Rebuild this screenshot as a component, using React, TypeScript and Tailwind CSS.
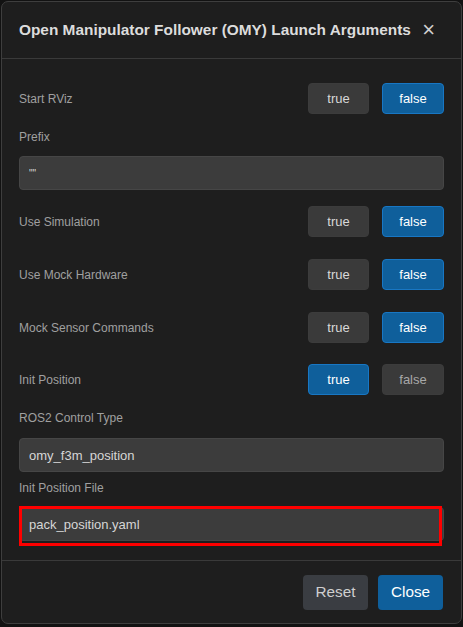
import { useState } from "react";

type ToggleArg = { kind: "toggle"; label: string; value: boolean };
type TextArg = { kind: "text"; label: string; value: string; small?: boolean; marked?: boolean };
type Arg = ToggleArg | TextArg;

const ARGS: Arg[] = [
  { kind: "toggle", label: "Start RViz", value: false },
  { kind: "text", label: "Prefix", value: '""', small: true },
  { kind: "toggle", label: "Use Simulation", value: false },
  { kind: "toggle", label: "Use Mock Hardware", value: false },
  { kind: "toggle", label: "Mock Sensor Commands", value: false },
  { kind: "toggle", label: "Init Position", value: true },
  { kind: "text", label: "ROS2 Control Type", value: "omy_f3m_position" },
  { kind: "text", label: "Init Position File", value: "pack_position.yaml", marked: true },
];

// spacing above each field, in order
const GAPS = ["mt-0", "mt-[15px]", "mt-[16px]", "mt-[22px]", "mt-[22px]", "mt-[21px]", "mt-[15px]", "mt-[8px]"];
// spacing between a text field's label and its input
const INPUT_GAPS = ["", "mt-[11px]", "", "", "", "", "mt-[12px]", "mt-[11px]"];

function ToggleButton({
  active,
  dim,
  wide,
  children,
  onClick,
}: {
  active: boolean;
  dim?: boolean;
  wide?: boolean;
  children: string;
  onClick: () => void;
}) {
  return (
    <button
      onClick={onClick}
      className={`h-[31px] rounded-[4px] border text-[13px] ${wide ? "w-[62px]" : "w-[61px]"} ${
        active
          ? "border-[#1877c4] bg-[#0f5f9b] text-white"
          : `border-[#3c3c3c] bg-[#3a3a3a] ${dim ? "text-[#a8a8a8]" : "text-[#d8d8d8]"}`
      }`}
    >
      {children}
    </button>
  );
}

export default function App() {
  const [values, setValues] = useState<Record<string, boolean | string>>(
    Object.fromEntries(ARGS.map((a) => [a.label, a.value])),
  );

  return (
    <div className="min-h-[627px] bg-[#121212] p-px font-['Liberation_Sans',Arial,sans-serif]">
      <div className="flex h-[623px] flex-col rounded-[7px] border border-[#3e3e3e] bg-[#1e1e1e]">
        {/* Header */}
        <div className="flex h-[57px] items-center justify-between border-b border-[#3a3a3a] pl-[17px] pr-[26px]">
          <h2 className="text-[15.4px] font-bold text-[#dcdcdc]">
            Open Manipulator Follower (OMY) Launch Arguments
          </h2>
          <button className="text-[22px] leading-none text-[#cfcfcf]">×</button>
        </div>

        {/* Body */}
        <div className="flex flex-1 flex-col px-[17px] pt-[24px]">
          {ARGS.map((arg, i) =>
            arg.kind === "toggle" ? (
              <div key={arg.label} className={`flex items-center justify-between ${GAPS[i]}`}>
                <span className="text-[12px] text-[#a0a0a0]">{arg.label}</span>
                <div className="flex gap-[13px]">
                  <ToggleButton
                    active={values[arg.label] === true}
                    onClick={() => setValues((v) => ({ ...v, [arg.label]: true }))}
                  >
                    true
                  </ToggleButton>
                  <ToggleButton
                    active={values[arg.label] === false}
                    dim
                    wide
                    onClick={() => setValues((v) => ({ ...v, [arg.label]: false }))}
                  >
                    false
                  </ToggleButton>
                </div>
              </div>
            ) : (
              <div key={arg.label} className={`flex flex-col ${GAPS[i]}`}>
                <label className="h-[16px] text-[12px] leading-[16px] text-[#a0a0a0]">{arg.label}</label>
                <div className={`relative ${INPUT_GAPS[i]}`}>
                  <input
                    value={values[arg.label] as string}
                    onChange={(e) => setValues((v) => ({ ...v, [arg.label]: e.target.value }))}
                    className={`h-[34px] w-full rounded-[4px] border border-[#464646] bg-[#3c3c3c] px-[9px] text-[#d6d6d6] outline-none ${
                      arg.small ? "text-[10px]" : "text-[13px]"
                    }`}
                  />
                  {arg.marked && (
                    <span className="pointer-events-none absolute -top-px left-0 h-[40px] w-[423px] border-[3px] border-[#ff0000]" />
                  )}
                </div>
              </div>
            ),
          )}
        </div>

        {/* Footer */}
        <div className="flex justify-end gap-[10px] border-t border-[#3a3a3a] px-[18px] pb-[13px] pt-[14px]">
          <button className="h-[35px] w-[65px] rounded-[4px] bg-[#3a3d42] text-[15.3px] text-[#cfcfcf]">
            Reset
          </button>
          <button className="h-[35px] w-[65px] rounded-[4px] bg-[#0f5f9b] text-[15.3px] text-white">
            Close
          </button>
        </div>
      </div>
    </div>
  );
}
